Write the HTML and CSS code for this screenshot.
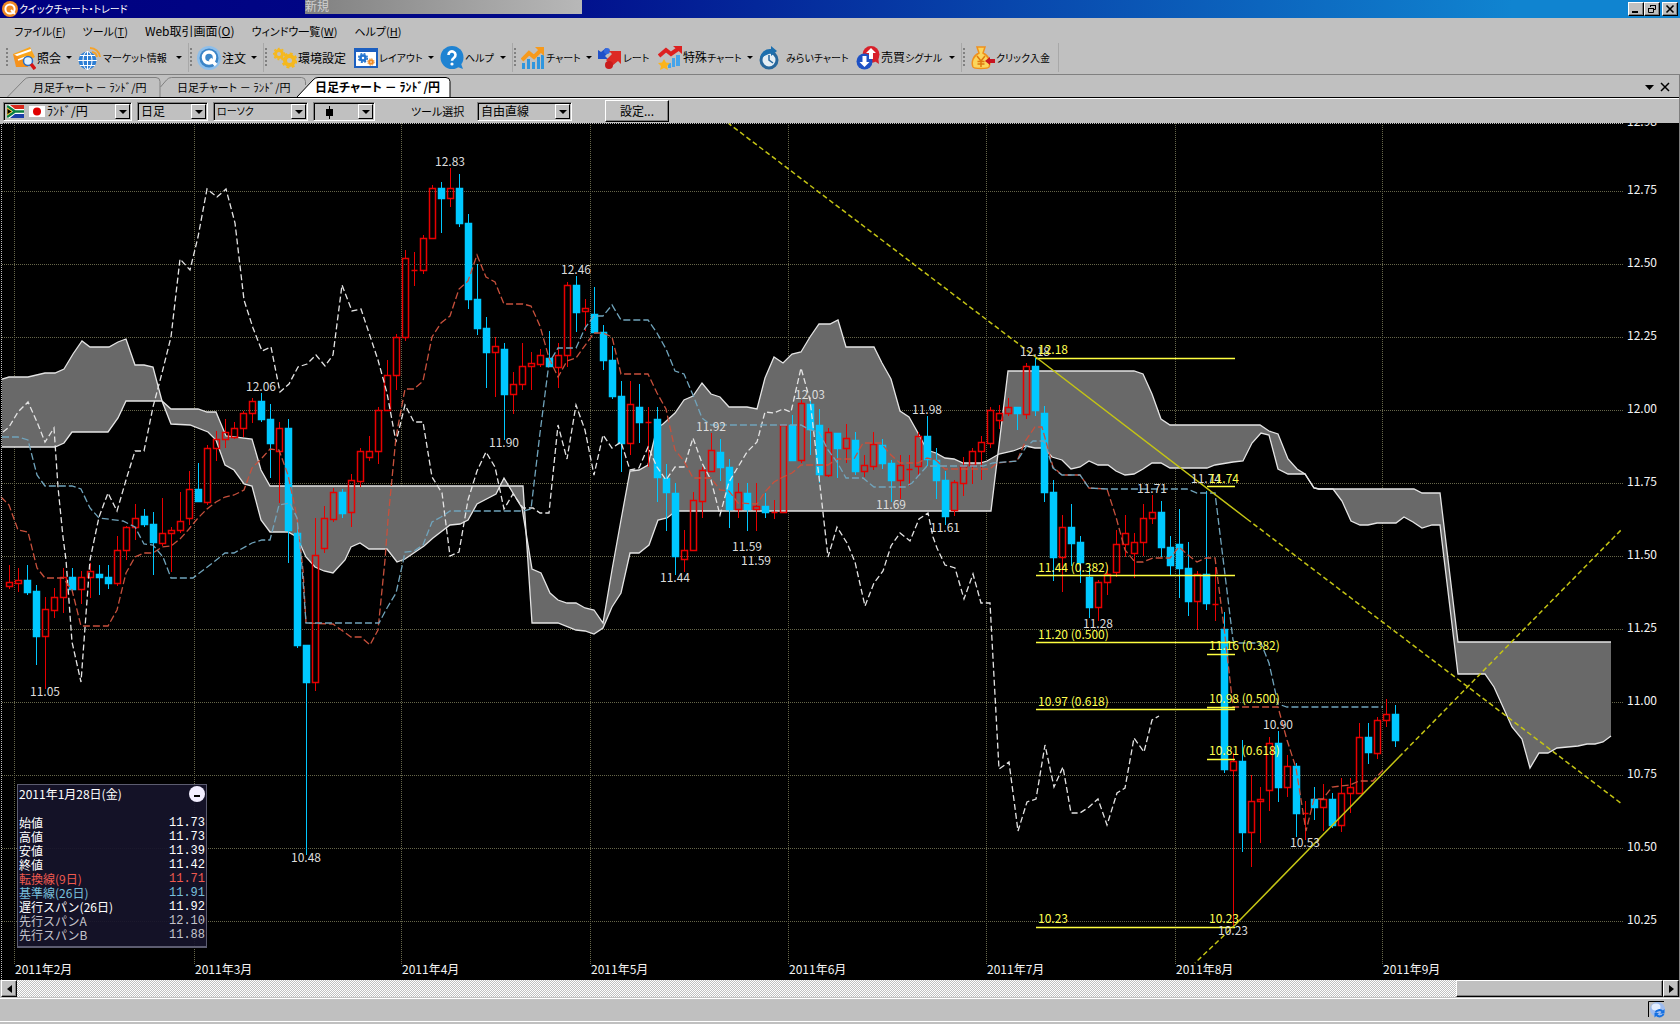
FILE: index.html
```html
<!DOCTYPE html>
<html lang="ja">
<head>
<meta charset="utf-8">
<title>クイックチャート・トレード</title>
<link rel="stylesheet" href="styles.css">
</head>
<body>
<header class="titlebar">
  <svg class="app-icon" viewBox="0 0 16 16" width="16" height="16"><circle cx="8" cy="8" r="8" fill="#f08a24"/><circle cx="8" cy="8" r="4.6" fill="none" stroke="#fff" stroke-width="2"/><path d="M9 9l4 4" stroke="#fff" stroke-width="2"/></svg>
  <h1 class="app-title">クイックチャート・トレード</h1>
  <div class="win-buttons">
    <button class="win-btn" aria-label="最小化"><svg width="12" height="10"><path d="M2 8h6" stroke="#000" stroke-width="2"/></svg></button>
    <button class="win-btn" aria-label="元に戻す"><svg width="12" height="10"><path d="M4.5 3V1.5h5v4H8M4 1.5h6M2.5 4.5h5v4h-5zM2 4.5h6" fill="none" stroke="#000"/></svg></button>
    <button class="win-btn win-close" aria-label="閉じる"><svg width="12" height="10"><path d="M2.500 1.500l7 7M9.500 1.500l-7 7" stroke="#000" stroke-width="1.600"/></svg></button>
  </div>
  <div class="ghost-title">新規</div>
</header>

<nav class="menubar">
  <button class="menu">ファイル(<u>F</u>)</button>
  <button class="menu">ツール(<u>T</u>)</button>
  <button class="menu"><span class="wide">Web取引画面(<u>O</u>)</span></button>
  <button class="menu">ウィンドウ一覧(<u>W</u>)</button>
  <button class="menu">ヘルプ(<u>H</u>)</button>
</nav>

<div class="toolbar">
  <div class="tool-group g1">
    <button class="tool w66 drop"><svg viewBox="0 0 24 24"><path d="M1 8L18 1l5 10-15 8z" fill="#f9a51c"/><path d="M2 10l17-6" stroke="#fff" stroke-width="2"/><path d="M1 8l3 13 12 0-1-6z" fill="#f6921c"/><path d="M6 14l8-3" stroke="#fff" stroke-width="1.500"/><circle cx="16" cy="15" r="4.500" fill="#dff1ff" stroke="#2a6fc4" stroke-width="1.500"/><path d="M19 18l4 5" stroke="#d81414" stroke-width="3.500"/></svg><span class="wide">照会</span></button>
    <button class="tool w110 drop"><svg viewBox="0 0 24 24"><circle cx="9.500" cy="14.500" r="9" fill="#2d7ed4"/><path d="M0 14.500h19M2 9.500h15M2 19.500h15M9.500 5v19" stroke="#fff" fill="none"/><ellipse cx="9.500" cy="14.500" rx="4.500" ry="9" fill="none" stroke="#fff"/><path d="M12 2a10 10 0 0 1 10 9M14 6a6 6 0 0 1 5 5" fill="none" stroke="#f6a32a" stroke-width="2"/></svg>マーケット情報</button>
  </div>
  <div class="tool-group g2">
    <button class="tool w66 drop"><svg viewBox="0 0 24 24"><circle cx="12" cy="12" r="12" fill="#8fbfea"/><circle cx="12" cy="12" r="9.500" fill="#3b85c8"/><circle cx="12" cy="11.500" r="5.500" fill="none" stroke="#fff" stroke-width="3.500"/><path d="M13 13l6 6" stroke="#fff" stroke-width="3.500"/></svg><span class="wide">注文</span></button>
  </div>
  <div class="tool-group g3">
    <button class="tool w80"><svg viewBox="0 0 24 24"><circle cx="6" cy="8" r="3.500" fill="none" stroke="#f5b81e" stroke-width="3"/><circle cx="6" cy="8" r="5.500" fill="none" stroke="#f5b81e" stroke-width="1.500" stroke-dasharray="2 2"/><circle cx="16.500" cy="14.500" r="4.500" fill="none" stroke="#f5b81e" stroke-width="4"/><circle cx="16.500" cy="14.500" r="7" fill="none" stroke="#f5b81e" stroke-width="2" stroke-dasharray="3 2.500"/></svg><span class="wide">環境設定</span></button>
    <button class="tool w86 drop"><svg viewBox="0 0 24 24"><path d="M1 3h22v18H1z" fill="#fff" stroke="#1c5fc0" stroke-width="2"/><path d="M0 2h24v4H0z" fill="#1c5fc0"/><circle cx="9" cy="12" r="2.500" fill="none" stroke="#2173d0" stroke-width="2.500"/><circle cx="9" cy="12" r="4.300" fill="none" stroke="#2173d0" stroke-width="1.500" stroke-dasharray="2 1.400"/><circle cx="17" cy="16" r="1.800" fill="none" stroke="#f08a24" stroke-width="2"/><circle cx="17" cy="16" r="3.200" fill="none" stroke="#f08a24" stroke-dasharray="1.500 1"/></svg>レイアウト</button>
    <button class="tool w70 drop"><svg viewBox="0 0 24 24"><circle cx="12" cy="11.500" r="11.500" fill="#1f83d2"/><path d="M15 20l8 3-3-8z" fill="#1f83d2"/><path d="M8.500 9a3.500 3.500 0 1 1 5.500 2.800c-1.400 1-2 1.500-2 3" fill="none" stroke="#fff" stroke-width="2.600"/><circle cx="12" cy="18" r="1.600" fill="#fff"/></svg>ヘルプ</button>
  </div>
  <div class="tool-group g4">
    <button class="tool w77 drop"><svg viewBox="0 0 24 24"><path d="M1 17h3v6H1zM6 13h3v10H6zM11 16h3v7h-3zM16 11h3v12h-3zM20 9h3v14h-3z" fill="#2f96de"/><path d="M1 14l7-7 5 4 7-7" fill="none" stroke="#f79a1c" stroke-width="4"/><path d="M14 1h9v9z" fill="#f79a1c"/></svg>チャート</button>
    <button class="tool w60"><svg viewBox="0 0 24 24"><path d="M0 4l3 2 5-4 3 4-4 4 3 3H0z" fill="#1f50c8"/><circle cx="9" cy="5" r="3" fill="#3468dc"/><path d="M23 5H11l3 3-6 6 6 6 6-5 3 3z" fill="#dd2a24"/><circle cx="11" cy="19" r="4" fill="#c81c1c"/></svg>レート</button>
    <button class="tool w101 drop"><svg viewBox="0 0 24 24"><path d="M10 17h3v5h-3zM14 12h3v9h-3zM18 9h4v11h-4z" fill="#45a4ea"/><path d="M1 10l7-6 5 4 7-5" fill="none" stroke="#dd2020" stroke-width="4"/><path d="M15 0h9v8z" fill="#dd2020"/><path d="M6 13l2 3.500 4 .5-3 3 1 4-4-2-4 2 1-4-3-3 4-.5z" fill="#fbb41c"/></svg><span><span class="wide">特殊</span>チャート</span></button>
    <button class="tool w97"><svg viewBox="0 0 24 24"><circle cx="10" cy="14" r="8" fill="#e4eef5" stroke="#27679c" stroke-width="3"/><path d="M10 9v5l4 3" fill="none" stroke="#27679c" stroke-width="1.500"/><path d="M1 12A10 10 0 0 1 12 3V0l6 5-6 5V7" fill="#1d6fae"/></svg><span class="late">みらいチャート</span></button>
    <button class="tool w102 drop"><svg viewBox="0 0 24 24"><circle cx="15" cy="8.500" r="8.500" fill="#d8202a"/><path d="M17 14l6 4-1-8z" fill="#d8202a"/><circle cx="8.500" cy="15.500" r="8" fill="#1d50c4"/><path d="M15 2l5 5h-3v6h-4V7h-3z" fill="#fff"/><path d="M8.500 21l-5-5h3v-6h4v6h3z" fill="#fff"/></svg><span><span class="wide">売買</span>シグナル</span></button>
  </div>
  <div class="tool-group g5">
    <button class="tool w88"><svg viewBox="0 0 24 24"><path d="M6 1h8l-2 6c6 3 8 9 6 14-1 2-15 2-16 0C0 16 2 10 8 7z" fill="#fbd65c" stroke="#f0901c" stroke-width="1.500"/><path d="M6 10l4 5 4-5M10 15v6M6.500 15.500h7M6.500 18h7" fill="none" stroke="#e07a10" stroke-width="1.500"/><path d="M14 15l5-4v2h5v4h-5v2z" fill="#c81420"/></svg>クリック入金</button>
  </div>
</div>

<main class="workspace">
  <div class="tabs" role="tablist">
    <svg class="tab-shapes" width="460" height="20" aria-hidden="true"><path d="M7.500 20L24 3q2-2.500 5-2.500h127q4 0 4 4V20" fill="none" stroke="#808080"/><path d="M160.500 10l6-7q2-2.500 5-2.500h130q4 0 4 4V8" fill="none" stroke="#808080"/><path d="M297 20L313 3q2-2.500 5-2.500h128q4 0 4 4V20" fill="#fff" stroke="#000"/></svg>
    <button class="tab t1" role="tab">月足チャート － ﾗﾝﾄﾞ/円</button>
    <button class="tab t2" role="tab">日足チャート － ﾗﾝﾄﾞ/円</button>
    <button class="tab active" role="tab" aria-selected="true">日足チャート － ﾗﾝﾄﾞ/円</button>
    <span class="tab-tools">
      <button class="flat" aria-label="タブ一覧"><svg width="9" height="5"><path d="M0 0h9L4.500 5z"/></svg></button>
      <button class="flat" aria-label="タブを閉じる"><svg width="10" height="10"><path d="M1 1l8 8M9 1l-8 8" stroke="#000" stroke-width="1.500"/></svg></button>
    </span>
  </div>

  <div class="controls">
    <div class="combo c1"><svg class="flags" width="38" height="13" viewBox="0 0 38 13"><path d="M0 0h17v13H0z" fill="#fff"/><path d="M3 0h14v4H8z" fill="#d8281c"/><path d="M3 13h14V9H8z" fill="#1c3fa8"/><path d="M0 1l8 5.500L0 12M7 6.500h10" fill="none" stroke="#0c8040" stroke-width="2.500"/><path d="M0 3v7l5-3.500z" fill="#000" stroke="#f0b81c"/><path d="M22 1h16v11H22z" fill="#fff"/><circle cx="30" cy="6.500" r="4" fill="#e00000"/></svg><select aria-label="通貨ペア"><option>ﾗﾝﾄﾞ/円</option></select><i class="arrow"></i></div>
    <div class="combo c2"><select aria-label="足種"><option>日足</option></select><i class="arrow"></i></div>
    <div class="combo c3"><select class="kana" aria-label="チャート種類"><option>ローソク</option></select><i class="arrow"></i></div>
    <div class="combo c4"><svg class="bar-glyph" width="7" height="13"><path d="M3.500 0v13" stroke="#000"/><path d="M0 3h7v7H0z"/></svg><select aria-label="表示スタイル"><option></option></select><i class="arrow"></i></div>
    <label class="tool-label" for="tool">ツール選択</label>
    <div class="combo c5"><select id="tool"><option>自由直線</option></select><i class="arrow"></i></div>
    <button class="settings">設定...</button>
  </div>

  <section class="chart">
    <svg class="plot" viewBox="0 123 1679 857" role="img" aria-label="ランド/円 日足チャート">
      <g id="grid" class="grid"></g>
      <path class="cloud" id="cloud"/>
      <polyline class="span" id="spanA"/>
      <polyline class="span" id="spanB"/>
      <g id="candles" class="candles"></g>
      <polyline class="lag" id="chikou"/>
      <polyline class="conv" id="tenkan"/>
      <polyline class="base" id="kijun"/>
      <path class="fib" d="M1036 358.500h199M1036 575.500h199M1036 642.500h199M1036 709.500h199M1036 927.500h199M1207 486.500h28M1207 654.500h28M1207 707.500h28M1207 759.500h28"/>
      <path class="trend" d="M1037 358L1247 519M1236 924L1399 757"/>
      <path class="trend dashed" d="M1037 358L728 123M1247 519L1622 804M1236 924L1195 963M1399 757L1622 529"/>
      <g id="marks" class="marks"></g>
      <g id="fibs" class="fib-labels"></g>
      <g id="axes" class="axis"></g>
      <path class="edge" d="M0 123.500h1624M1.500 123v857"/>
    </svg>
    <aside class="info">
      <div class="info-head">2011年1月28日(金)<button class="collapse" aria-label="たたむ"></button></div>
      <table>
        <tr><th>始値</th><td>11.73</td></tr>
        <tr><th>高値</th><td>11.73</td></tr>
        <tr><th>安値</th><td>11.39</td></tr>
        <tr><th>終値</th><td>11.42</td></tr>
        <tr class="red"><th>転換線(9日)</th><td>11.71</td></tr>
        <tr class="blue"><th>基準線(26日)</th><td>11.91</td></tr>
        <tr><th>遅行スパン(26日)</th><td>11.92</td></tr>
        <tr class="dim"><th>先行スパンA</th><td>12.10</td></tr>
        <tr class="dim"><th>先行スパンB</th><td>11.88</td></tr>
      </table>
    </aside>
  </section>

  <div class="scrollbar">
    <button class="sb-btn" aria-label="左へ"><svg width="5" height="8"><path d="M5 0v8L0 4z"/></svg></button>
    <div class="sb-track"><div class="sb-thumb"></div></div>
    <button class="sb-btn" aria-label="右へ"><svg width="5" height="8"><path d="M0 0v8l5-4z"/></svg></button>
  </div>
</main>

<footer class="status">
  <svg width="18" height="17" viewBox="0 0 18 17"><path d="M.5 16V.5H16" fill="none" stroke="#000"/><circle cx="9.500" cy="8.500" r="7.500" fill="#9dbcf0"/><ellipse cx="8" cy="6" rx="4.500" ry="3.500" fill="#e4eeff"/><path d="M7.500 11.500a4 3.500 0 0 1 7-1M15.500 13a4 3.500 0 0 1-7 1" fill="none" stroke="#1470e0" stroke-width="2"/><path d="M16.500 8v4.500H12zM6.500 16.500V12H11z" fill="#1470e0"/></svg>
</footer>
<script src="chart.js"></script>
</body>
</html>
```

FILE: styles.css
```css
* { box-sizing: border-box; }
body {
  margin: 0;
  min-height: 100vh;
  display: flex;
  flex-direction: column;
  background: #c0c0c0;
  color: #000;
  font: 12px/14px "Noto Sans CJK JP", sans-serif;
  font-feature-settings: "palt";
}
button, select { font: inherit; font-feature-settings: inherit; color: inherit; }
button { border: 0; padding: 0; background: none; white-space: nowrap; }

.titlebar {
  position: relative;
  height: 18px;
  display: flex;
  align-items: center;
  padding: 0 2px;
  background: linear-gradient(90deg, #000080 0%, #000888 30%, #1084d0 90%);
  color: #fff;
}
.app-icon { margin-right: 1px; }
.app-title { margin: 0; font-size: 10px; font-weight: 400; flex: 1; }
.ghost-title {
  position: absolute;
  left: 305px;
  top: 0;
  width: 277px;
  height: 14px;
  line-height: 12px;
  background: linear-gradient(90deg, #808080, #b8b8b8);
  color: #d0d0d0;
}
.win-buttons { display: flex; }
.win-btn {
  width: 16px;
  height: 14px;
  background: #c0c0c0;
  border: 1px solid;
  border-color: #fff #000 #000 #fff;
  box-shadow: inset -1px -1px #808080;
  display: grid;
  place-items: center;
}
.win-close { margin-left: 2px; }

.menubar { display: flex; gap: 17px; height: 25px; align-items: center; padding-left: 14px; font-size: 11px; }
.wide { font-size: 12px; }

.toolbar { display: flex; height: 31px; padding: 0 0 2px 5px; font-size: 10px; }
.tool-group { display: flex; align-items: center; padding-left: 7px; position: relative; border-right: 1px solid #a8a8a8; }
.tool-group::before {
  content: "";
  position: absolute;
  left: 1px;
  top: 5px;
  width: 2px;
  height: 20px;
  background: repeating-linear-gradient(#808080 0 2px, transparent 2px 4px);
}
.g1 { width: 184px; }
.g2 { width: 75px; padding-left: 8px; }
.g3 { width: 249px; padding-left: 9px; }
.g4 { width: 449px; padding-left: 8px; }
.g5 { width: 97px; padding-left: 9px; }
.tool { display: flex; align-items: center; gap: 1px; height: 26px; text-align: left; }
.tool svg { width: 24px; height: 24px; flex: none; }
.tool.drop::after {
  content: "";
  margin-left: auto;
  margin-right: 6px;
  border: 3px solid transparent;
  border-top-color: #000;
  border-bottom: 0;
}
.late { margin-left: 2px; }
.w66 { width: 66px; }
.w60 { width: 60px; }
.w70 { width: 72px; }
.w77 { width: 77px; }
.w80 { width: 81px; }
.w86 { width: 86px; }
.w88 { width: 88px; }
.w97 { width: 97px; }
.w101 { width: 101px; }
.w102 { width: 105px; }
.w110 { width: 110px; }

.workspace { border-top: 1px solid #808080; border-right: 1px solid #808080; }
.tabs { position: relative; display: flex; height: 23px; padding-top: 2px; border-bottom: 1px solid #000; }
.tab-shapes { position: absolute; left: 0; top: 2px; }
.tab { position: relative; height: 19px; text-align: left; font-size: 11px; }
.t1 { margin-left: 33px; width: 144px; }
.t2 { width: 138px; }
.active { font-weight: 700; font-size: 12px; }
.tab-tools { margin-left: auto; display: flex; gap: 6px; align-items: center; padding-right: 9px; }
.flat { display: grid; place-items: center; height: 12px; }

.controls { display: flex; align-items: center; height: 25px; padding-left: 3px; border-top: 1px solid #fff; }
.combo {
  position: relative;
  height: 19px;
  margin-right: 5px;
  border: 1px solid;
  border-color: #808080 #fff #fff #808080;
  box-shadow: inset 1px 1px #000;
}
.combo select {
  appearance: none;
  width: 100%;
  height: 17px;
  padding: 0 18px 0 3px;
  border: 0;
  background: none;
}
.combo .kana { font-size: 10px; }
.arrow {
  position: absolute;
  right: 1px;
  top: 1px;
  width: 15px;
  height: 15px;
  border: 1px solid;
  border-color: #fff #000 #000 #fff;
  background: #c0c0c0;
  pointer-events: none;
}
.arrow::after {
  content: "";
  position: absolute;
  left: 3px;
  top: 5px;
  border: 4px solid transparent;
  border-top-color: #000;
  border-bottom: 0;
}
.c1 { width: 129px; }
.c1 select { padding-left: 43px; }
.flags { position: absolute; left: 3px; top: 2px; }
.c2 { width: 71px; }
.c3 { width: 95px; }
.c4 { width: 62px; }
.bar-glyph { position: absolute; left: 12px; top: 3px; }
.c5 { width: 95px; }
.tool-label { margin-left: 31px; width: 66px; font-size: 11px; }
.settings {
  margin-left: 28px;
  width: 64px;
  height: 22px;
  border: 1px solid;
  border-color: #fff #000 #000 #fff;
  box-shadow: inset -1px -1px #808080;
}

.chart { position: relative; background: #000; }
.plot { display: block; width: 100%; height: auto; overflow: hidden; font: 12px "Noto Sans CJK JP", sans-serif; font-feature-settings: normal; }
.grid { stroke: #66664a; stroke-dasharray: 1 1; fill: none; shape-rendering: crispEdges; }
.edge { stroke: #c0c0c0; stroke-dasharray: 1 1; fill: none; shape-rendering: crispEdges; }
.cloud { fill: #696969; }
.span, .lag, .conv, .base { fill: none; stroke-width: 1.3; }
.span { stroke: #e4e4e4; }
.lag { stroke: #e4e4e4; stroke-dasharray: 6 3; }
.conv { stroke: #c8503c; stroke-dasharray: 7 3; }
.base { stroke: #70a4bc; stroke-dasharray: 7 3; }
.wick { shape-rendering: crispEdges; }
.up { fill: none; stroke: #e80000; }
.down { fill: #00c8ff; stroke: #00c8ff; }
.body { stroke-width: 1.5; }
.fib { stroke: #ffff40; stroke-width: 1.5; }
.trend { stroke: #c4c414; stroke-width: 1.5; fill: none; }
.dashed { stroke-dasharray: 5 3; }
.marks { fill: #dcdcdc; }
.fib-labels { fill: #ffff50; }
.axis { fill: #f4f4f4; }

.info {
  position: absolute;
  left: 17px;
  bottom: 32px;
  width: 190px;
  height: 164px;
  padding: 1px 1px 2px;
  background: rgba(22, 20, 42, 0.92);
  border: 1px solid #5c5c70;
  border-bottom-width: 2px;
  color: #fff;
  font-feature-settings: normal;
}
.info-head { display: flex; justify-content: space-between; height: 30px; line-height: 16px; }
.collapse {
  width: 16px;
  height: 16px;
  border-radius: 50%;
  background: linear-gradient(#000, #000) 5px 9px / 6px 2px no-repeat, #f2eeff;
}
.info table { width: 100%; border-collapse: collapse; }
.info th, .info td { padding: 0; height: 14px; line-height: 14px; font-weight: 400; text-align: left; }
.info td { text-align: right; font-family: "Liberation Mono", monospace; }
.info .red { color: #f05a50; }
.info .blue { color: #78c0dc; }
.info .dim { color: #c4c4cc; }

.scrollbar { display: flex; height: 17px; padding-left: 1px; }
.sb-btn, .sb-thumb {
  background: #c0c0c0;
  border: 1px solid;
  border-color: #fff #000 #000 #fff;
  box-shadow: inset -1px -1px #808080;
}
.sb-btn { width: 16px; display: grid; place-items: center; }
.sb-track {
  flex: 1;
  display: flex;
  justify-content: flex-end;
  background: conic-gradient(#fff 25%, #c0c0c0 0 50%, #fff 0 75%, #c0c0c0 0) 0 0 / 2px 2px;
}
.sb-thumb { width: 207px; }

.status {
  flex: 1;
  display: flex;
  justify-content: flex-end;
  align-items: flex-start;
  padding: 2px 14px 0 0;
  margin: 1px 0 2px;
  border-top: 1px solid #fff;
  border-bottom: 1px solid #fff;
}
```

FILE: chart.js
```js
// Daily candles, 9px apart: direction, high, body top, body bottom, low.
const candles = `u565,582,586,589 u568,580,583,592 d565,580,592,595 d585,591,636,665 u597,609,636,689 u588,597,610,618 u568,577,597,613 d568,577,589,592 u571,577,589,604 u563,571,577,598
d565,574,577,595 d565,577,583,589 u536,550,583,586 u526,527,550,560 u504,518,527,540 d509,516,524,527 d512,524,542,575 u498,533,543,546 u527,530,533,572 u492,521,530,533
u471,489,518,525 d463,489,501,501 u445,448,502,505 u431,439,448,461 u419,432,439,448 u422,428,437,439 u411,413,428,437 u398,401,413,423 d393,401,419,422 d404,419,443,478
u422,428,451,503 d419,428,530,563 d518,533,645,648 d645,645,682,855 u518,555,682,691 u506,518,548,553 u488,492,519,522 d489,492,513,518 u474,480,512,527 u448,451,481,487
u436,451,457,461 u407,410,451,464 u360,375,410,410 u334,337,375,390 u250,258,337,341 u252,270,270,286 u235,238,270,274 u185,188,238,238 d182,188,198,233 u168,188,198,207
d174,188,223,227 d214,223,299,309 d264,299,328,335 d317,328,352,388 u337,346,352,397 d343,349,394,440 u372,384,394,414 u343,366,384,390 u352,363,366,390 u349,355,364,367
d331,358,366,366 u343,355,367,388 u282,285,355,367 d276,285,312,332 u299,308,311,331 d287,314,332,332 d325,332,360,370 d346,360,396,399 d381,396,443,472 u381,404,443,455
d384,407,422,443 u407,422,422,467 d407,419,477,502 d464,478,492,531 d483,493,556,575 u530,550,559,572 u492,500,550,550 u467,470,501,518 u433,450,471,471 d439,452,467,481
d459,467,509,528 u483,492,509,518 d483,493,509,531 u483,506,509,531 d493,506,512,518 u500,512,512,519 u425,425,512,512 d415,425,460,460 u400,403,460,463 d400,404,429,455
d409,425,474,483 u428,432,475,477 d433,433,448,478 u424,438,448,463 d432,440,471,475 u455,465,471,477 u432,444,466,470 d439,445,463,469 d460,463,480,502 u455,465,480,499
u455,469,469,486 u432,436,466,477 d416,436,459,466 d448,460,480,499 d471,480,516,525 u480,482,510,516 u457,466,483,496 u448,451,465,484 u436,442,451,480 u407,410,443,448
u405,413,420,429 u398,407,413,416 d407,407,413,430 u363,366,414,419 d358,366,410,416 d406,413,492,502 d480,492,557,581 u515,527,557,592 d504,527,543,566 d536,542,562,583
d565,577,607,618 u580,582,607,621 u565,574,582,595 u530,544,572,577 u515,533,544,557 u533,542,553,578 u504,518,542,556 u495,512,518,524 d501,512,547,557 d536,547,565,575
d509,544,568,598 d542,568,601,616 u571,574,601,630 d491,574,603,610 u567,604,604,621 d612,629,769,773 u753,761,770,927 d740,761,832,852 u775,801,832,867 u787,799,801,843
u737,743,790,811 d731,743,787,802 u755,766,787,797 d763,766,813,837 u801,813,813,840 d787,799,807,820 u784,799,807,831 d793,799,825,828 u778,793,825,832 u778,787,793,813
u723,737,793,793 d723,737,752,764 u717,720,753,759 u699,714,720,727 d705,714,740,747`.split(/\s+/);

const spanA = '2,379 9,377 28,377 45,373 55,373 64,369 73,354 82,341 90,347 109,347 118,342 126,339 135,365 144,365 153,367 162,401 171,424 190,425 208,432 216,440 225,465 234,470 244,484 252,486 261,520 270,532 288,532 297,537 306,557 315,567 324,571 333,573 345,560 351,547 360,543 369,549 387,549 397,562 405,559 424,546 433,538 450,525 460,524 468,520 477,504 496,494 504,478 513,493 522,508 532,569 541,573 550,593 558,600 567,603 576,603 585,608 594,610 603,623 612,570 621,520 630,471 639,470 648,465 657,428 663,424 675,413 684,400 693,396 702,383 711,394 720,397 729,407 747,407 757,409 765,378 774,357 783,363 792,354 801,352 810,337 819,324 830,324 838,320 846,347 874,347 882,363 891,379 900,411 909,417 918,433 927,450 936,453 945,458 954,459 963,463 980,463 987,461 999,454 1013,451 1026,446 1035,448 1044,448 1052,457 1062,460 1071,469 1080,467 1089,461 1098,465 1108,465 1116,471 1125,475 1134,474 1143,469 1152,463 1161,463 1170,468 1207,468 1215,465 1233,462 1243,461 1252,443 1261,433 1269,435 1278,469 1288,474 1305,474 1314,488 1319,489 1333,489 1342,501 1351,521 1360,525 1368,525 1377,523 1396,523 1404,517 1413,522 1422,528 1432,525 1440,525 1458,674 1485,674 1494,687 1512,727 1522,739 1530,768 1539,753 1548,753 1557,748 1578,746 1587,744 1595,744 1603,742 1611,736';
const spanB = '2,447 55,447 64,443 72,432 108,432 118,418 126,401 162,401 171,409 198,409 207,412 216,412 226,436 252,439 261,470 270,486 523,486 532,623 558,623 576,630 585,631 594,634 603,628 612,607 621,593 630,553 639,553 649,545 658,520 667,518 676,511 991,511 1008,371 1134,371 1143,374 1152,394 1161,419 1170,425 1260,425 1269,431 1278,434 1288,459 1297,469 1305,474 1314,488 1319,489 1414,489 1422,493 1440,493 1458,642 1611,642';
const lines = {
  spanA, spanB,
  chikou: '3,432 9,427 18,412 28,402 37,422 45,442 54,428 58,487 63,537 66,560 72,642 81,682 90,560 99,517 108,493 117,511 126,480 135,451 144,451 153,407 162,373 171,337 180,259 190,270 198,237 207,189 217,197 226,189 235,223 244,300 253,328 262,351 271,347 280,392 289,384 298,367 307,364 316,355 325,366 333,355 342,285 352,311 361,309 369,333 378,360 387,393 396,442 405,405 414,422 423,422 432,477 442,493 450,556 459,552 468,500 477,471 486,452 495,467 504,509 513,494 523,508 533,508 540,513 549,513 558,425 567,459 576,405 585,430 594,475 603,435 612,448 621,442 630,470 639,468 648,447 657,467 666,480 675,467 684,467 693,438 702,463 711,480 720,515 729,482 738,467 747,452 757,442 765,412 774,413 783,409 791,412 801,368 810,400 819,477 828,557 837,527 847,543 855,562 865,606 874,583 883,571 891,546 900,533 910,541 919,519 928,513 933,537 937,548 945,565 955,568 964,599 973,574 981,603 990,603 999,769 1009,762 1018,831 1027,802 1036,799 1045,745 1054,787 1063,767 1071,813 1080,813 1089,807 1098,799 1107,825 1117,793 1125,788 1134,738 1144,752 1152,720 1159,716',
  tenkan: '1,497 9,505 18,530 28,532 37,568 45,578 63,578 72,590 81,626 108,626 117,610 126,573 135,557 144,553 153,553 162,547 171,546 180,539 189,529 198,518 207,509 216,502 225,497 234,495 244,490 252,468 262,458 270,449 279,450 288,475 297,517 303,570 306,623 333,624 351,637 361,637 370,645 378,630 385,560 388,520 396,437 405,389 414,389 423,381 432,337 441,323 450,316 459,289 468,281 477,255 486,277 495,282 504,304 523,304 531,306 540,326 549,358 558,377 567,361 576,358 594,333 603,333 612,337 621,374 648,374 657,393 666,409 675,450 684,461 693,478 711,478 720,490 729,491 738,503 757,504 765,492 774,482 783,477 792,473 801,465 828,465 837,459 854,459 863,443 881,443 891,455 900,463 918,463 927,458 936,460 945,469 990,469 997,463 1017,461 1026,440 1035,427 1042,427 1053,467 1062,475 1080,475 1089,488 1107,489 1116,517 1125,550 1135,562 1143,562 1153,558 1170,558 1179,547 1188,555 1197,562 1206,558 1215,558 1224,627 1233,707 1278,707 1287,740 1296,768 1306,831 1314,799 1323,799 1332,787 1350,785 1359,781 1373,781 1385,768',
  kijun: '2,437 18,437 28,440 37,475 45,486 72,486 81,489 90,508 99,518 123,521 135,527 144,544 153,545 163,557 171,578 193,578 215,561 225,553 234,553 252,543 262,540 270,540 279,505 290,503 297,518 302,567 306,623 379,623 387,608 396,593 403,562 405,552 414,551 423,545 432,522 441,517 450,511 523,511 531,509 540,433 549,363 558,348 576,348 585,328 594,316 603,316 612,305 621,320 648,320 657,333 666,349 675,371 684,374 693,395 702,418 711,425 801,425 810,430 819,432 828,450 837,462 846,478 863,478 874,487 905,487 912,483 927,466 983,466 993,463 1017,461 1026,447 1033,441 1044,441 1053,468 1062,475 1080,475 1089,488 1107,489 1187,489 1197,493 1215,493 1233,640 1235,643 1261,643 1269,663 1278,704 1287,707 1383,707'
};
for (const id in lines) document.getElementById(id).setAttribute('points', lines[id]);
document.getElementById('cloud').setAttribute('d',
  'M' + spanA.split(' ').concat(spanB.split(' ').reverse()).join('L') + 'Z');

document.getElementById('candles').innerHTML = candles.map((c, i) => {
  const [hi, top, bottom, lo] = c.slice(1).split(',').map(Number);
  const x = 9.5 + 9 * i;
  const dir = c[0] === 'u' ? 'up' : 'down';
  return `<path class="wick ${dir}" d="M${x} ${hi}V${top}M${x} ${bottom}V${lo}"/>` +
    `<path class="body ${dir}" d="M${x - 3} ${top + 0.5}h6V${bottom + 0.5}h-6z"/>`;
}).join('');

const text = (x, y, s) => `<text x="${x}" y="${y}">${s}</text>`;
const months = [14, 194, 401, 590, 788, 986, 1175, 1382];
let grid = '', axes = text(1627, 126, '12.98');
months.forEach((x, i) => {
  grid += `M${x + 0.5} 123V965`;
  axes += text(x + 1, 974, `2011年${i + 2}月`);
});
for (let i = 0; i < 11; i++) {
  const y = 191 + 73 * i;
  grid += `M2 ${y + 0.5}H1624`;
  axes += text(1627, y + 3, (12.75 - i / 4).toFixed(2));
}
document.getElementById('grid').innerHTML = `<path d="${grid}"/>`;
document.getElementById('axes').innerHTML = axes;

const marks = [[435, 166, '12.83'], [561, 274, '12.46'], [489, 447, '11.90'], [660, 582, '11.44'], [696, 431, '11.92'],
  [732, 551, '11.59'], [741, 565, '11.59'], [246, 391, '12.06'], [30, 696, '11.05'], [291, 862, '10.48'],
  [795, 399, '12.03'], [912, 414, '11.98'], [876, 509, '11.69'], [930, 532, '11.61'], [1020, 356, '12.18'],
  [1137, 493, '11.71'], [1191, 483, '11.74'], [1083, 628, '11.28'], [1263, 729, '10.90'], [1290, 847, '10.53'], [1218, 935, '10.23']];
document.getElementById('marks').innerHTML = marks.map(m => text(...m)).join('');

const fibs = [[1038, 354, '12.18'], [1038, 572, '11.44 (0.382)'], [1038, 639, '11.20 (0.500)'], [1038, 706, '10.97 (0.618)'],
  [1038, 923, '10.23'], [1209, 483, '11.74'], [1209, 650, '11.16 (0.382)'], [1209, 703, '10.98 (0.500)'],
  [1209, 755, '10.81 (0.618)'], [1209, 923, '10.23']];
document.getElementById('fibs').innerHTML = fibs.map(f => text(...f)).join('');
```
